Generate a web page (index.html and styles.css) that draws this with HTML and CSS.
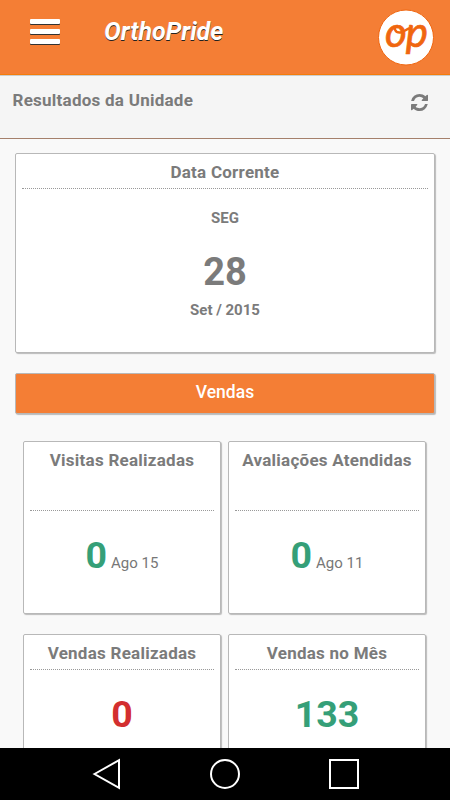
FILE: index.html
```html
<!DOCTYPE html>
<html lang="pt-BR">
<head>
    <meta charset="UTF-8">
    <meta name="viewport" content="width=device-width, initial-scale=1.0">
    <title>OrthoPride</title>
    <link rel="stylesheet" href="styles.css">
</head>
<body>
    <header class="topbar">
        <button class="menu-btn" aria-label="Menu">
            <span></span>
            <span></span>
            <span></span>
        </button>
        <h1 class="brand">OrthoPride</h1>
        <svg class="logo" width="58" height="58" viewBox="0 0 58 58">
            <circle cx="29" cy="29.500" r="27.500" fill="#fff" stroke="#f0660f" stroke-width="1"/>
            <text class="logo-text" x="8" y="38.500" textLength="43">op</text>
            <path d="M20 18 C16 19.500 18 25 23.500 24.500 C27 24 29 21.500 32 20.500" fill="none" stroke="#f0660f" stroke-width="2.400" stroke-linecap="round"/>
        </svg>
    </header>

    <div class="subbar">
        <h2>Resultados da Unidade</h2>
        <button class="refresh-btn" aria-label="Atualizar">
            <svg width="17" height="17" viewBox="0 0 1536 1536">
                <path fill="#7b7b7b" d="M1511 928q0 5-1 7-64 268-268 434.500T764 1536q-146 0-282.500-55T238 1324l-129 129q-19 19-45 19t-45-19-19-45V960q0-26 19-45t45-19h448q26 0 45 19t19 45-19 45l-137 137q71 66 161 102t187 36q134 0 250-65t186-179q11-17 53-117 8-23 30-23h192q13 0 22.500 9.500t9.500 22.500zm25-800v448q0 26-19 45t-45 19h-448q-26 0-45-19t-19-45 19-45l138-138Q969 256 768 256q-134 0-250 65T332 500q-11 17-53 117-8 23-30 23H50q-13 0-22.500-9.500T18 608v-7q65-268 270-434.500T768 0q146 0 284 55.500T1297 212l130-129q19-19 45-19t45 19 19 45z"/>
            </svg>
        </button>
    </div>

    <main class="content">
        <section class="card date-card">
            <h3>Data Corrente</h3>
            <p class="weekday">SEG</p>
            <p class="day">28</p>
            <p class="month">Set / 2015</p>
        </section>

        <div class="section-title">Vendas</div>

        <div class="card-grid">
            <section class="card">
                <h3 class="tall">Visitas Realizadas</h3>
                <p class="value"><span class="green">0</span><small>Ago 15</small></p>
            </section>
            <section class="card">
                <h3 class="tall">Avaliações Atendidas</h3>
                <p class="value"><span class="green">0</span><small>Ago 11</small></p>
            </section>
            <section class="card">
                <h3>Vendas Realizadas</h3>
                <p class="value"><span class="red">0</span></p>
            </section>
            <section class="card">
                <h3>Vendas no Mês</h3>
                <p class="value"><span class="green">133</span></p>
            </section>
        </div>
    </main>

    <nav class="android-nav">
        <svg width="30" height="32" viewBox="0 0 30 32">
            <path d="M2.500 16 L27 2.200 V29.800 Z"/>
        </svg>
        <svg width="32" height="32" viewBox="0 0 32 32">
            <circle cx="16" cy="16" r="14"/>
        </svg>
        <svg width="32" height="32" viewBox="0 0 32 32">
            <rect x="2" y="2" width="28" height="28"/>
        </svg>
    </nav>
</body>
</html>
```

FILE: styles.css
```css
* {
    box-sizing: border-box;
}
body {
    margin: 0;
    height: 100vh;
    display: flex;
    flex-direction: column;
    overflow: hidden;
    font-family: Roboto, sans-serif;
    color: #7b7b7b;
    background-color: #f9f9f9;
}
h1, h2, h3, p {
    margin: 0;
}
button {
    border: none;
    padding: 0;
    background: none;
    cursor: pointer;
}

/* Header */
.topbar {
    flex: none;
    height: 75px;
    display: flex;
    align-items: flex-start;
    padding: 0 15px 0 30px;
    background-color: #f47e35;
    border-bottom: 1px solid #f57c0a;
}
.menu-btn {
    display: flex;
    flex-direction: column;
    gap: 5px;
    margin-top: 19px;
}
.menu-btn span {
    width: 30px;
    height: 5px;
    border-radius: 1px;
    background-color: #fff;
    box-shadow: 0 1px 0 #333;
}
.brand {
    margin: 17px 0 0 44px;
    font-size: 25px;
    line-height: 29px;
    font-style: italic;
    font-weight: 700;
    color: #fff;
    text-shadow: 0 1px 0 #222;
}
.logo {
    margin: 8px 0 0 auto;
    overflow: visible;
}
.logo-text {
    font-family: Lato, sans-serif;
    font-style: italic;
    font-weight: 400;
    font-size: 42px;
    fill: #f0660f;
    stroke: #f0660f;
    stroke-width: 0.7px;
}
.subbar {
    flex: none;
    height: 64px;
    display: flex;
    justify-content: space-between;
    align-items: flex-start;
    padding: 14px 22px 0 12.5px;
    background-color: #f5f5f5;
    border-top: 1px solid #ccc;
    border-bottom: 1px solid #a5806b;
}
.subbar h2 {
    font-size: 17px;
    line-height: 20px;
    letter-spacing: 0.25px;
}
.refresh-btn {
    display: flex;
    margin-top: 4px;
}

/* Cards */
.content {
    flex: 1;
    min-height: 0;
    overflow: hidden;
    padding: 14px 15px 0;
}
.card {
    padding: 0 6px;
    text-align: center;
    background-color: #fff;
    border: 1px solid #b8b8b8;
    border-radius: 2px;
    box-shadow: 1px 1px 1px #bbb;
}
.card h3 {
    height: 35px;
    padding-top: 8px;
    font-size: 17px;
    line-height: 20px;
    letter-spacing: 0.25px;
    white-space: nowrap;
    border-bottom: 1px dotted #999;
}
.card h3.tall {
    height: 69px;
}
.date-card {
    height: 200px;
}
.weekday {
    margin-top: 20px;
    font-size: 15px;
    line-height: 18px;
    font-weight: 700;
}
.day {
    margin-top: 22px;
    font-size: 38px;
    line-height: 46px;
    font-weight: 700;
}
.month {
    margin-top: 6px;
    font-size: 15px;
    line-height: 18px;
    font-weight: 700;
}
.section-title {
    height: 41px;
    margin-top: 20px;
    font-size: 17.5px;
    line-height: 37px;
    font-weight: 500;
    text-align: center;
    color: #fff;
    background-color: #f47e35;
    border: 1px solid #b8b8b8;
    border-radius: 2px;
    box-shadow: 1px 1px 1px #bbb;
}
.card-grid {
    display: grid;
    grid-template-columns: 198px 198px;
    grid-auto-rows: 173px;
    gap: 20px 7px;
    margin: 27px 0 0 8px;
}
.value {
    display: flex;
    justify-content: center;
    align-items: baseline;
    gap: 4px;
    margin-top: 21px;
    font-size: 37.5px;
    line-height: 46px;
    font-weight: 700;
}
.value small {
    font-size: 15px;
    line-height: 18px;
    font-weight: 400;
    color: #777;
}
.green {
    color: #359f78;
}
.red {
    color: #d32f2f;
}

/* System buttons */
.android-nav {
    flex: none;
    height: 52px;
    display: flex;
    justify-content: center;
    gap: 87px;
    padding: 10px 0 0 2px;
    background-color: #000;
}
.android-nav svg {
    fill: none;
    stroke: #fff;
    stroke-width: 2;
}
```
